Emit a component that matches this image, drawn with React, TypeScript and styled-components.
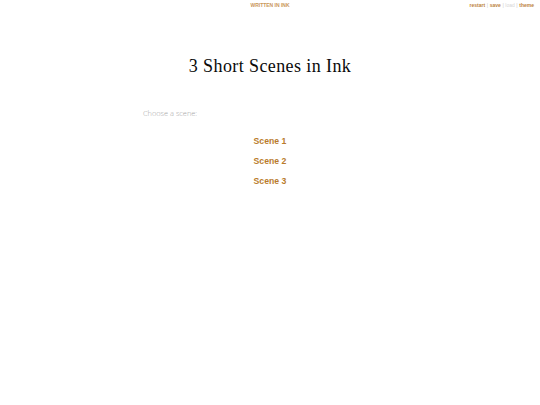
import React, { FC } from "react";
import styled, { createGlobalStyle } from "styled-components";

const GlobalStyle = createGlobalStyle`
  html, body {
    margin: 0;
    padding: 0;
    background: #ffffff;
  }
  body {
    font-family: "Open Sans", sans-serif;
    font-weight: 300;
  }
`;

const Page = styled.div`
  width: 540px;
  min-height: 405px;
  display: flex;
  flex-direction: column;
`;

const TopBar = styled.header`
  display: grid;
  grid-template-columns: 1fr auto 1fr;
  align-items: center;
  height: 10px;
  padding: 0 6px;
  font-family: "Liberation Sans", Arial, sans-serif;
  font-size: 5px;
  font-weight: 700;
`;

const WrittenInInk = styled.div`
  grid-column: 2;
  color: #c9965a;
`;

const Controls = styled.nav`
  grid-column: 3;
  justify-self: end;
  display: flex;
  gap: 1.6px;
`;

const ControlLink = styled.span<{ $disabled?: boolean }>`
  color: ${({ $disabled }) => ($disabled ? "#d6d6d6" : "#bb8240")};
  font-weight: ${({ $disabled }) => ($disabled ? 400 : 700)};
`;

const Separator = styled.span`
  color: #c8c8c8;
  font-weight: 400;
`;

const Container = styled.main`
  width: 254px;
  margin: 0 auto;
  padding-top: 43px;
`;

const Title = styled.h1`
  margin: 0;
  font-family: "Liberation Serif", "Times New Roman", serif;
  font-size: 18px;
  font-weight: 400;
  letter-spacing: 0.4px;
  color: #0a0a0a;
  text-align: center;
  line-height: 26px;
`;

const Prompt = styled.p`
  margin: 27px 0 0;
  font-family: "Open Sans", sans-serif;
  font-weight: 300;
  font-size: 7.4px;
  line-height: 14px;
  color: #a6a6a6;
`;

const Choices = styled.div`
  display: flex;
  flex-direction: column;
  align-items: center;
  gap: 5px;
  margin-top: 14px;
`;

const Choice = styled.a`
  font-family: "Liberation Sans", Arial, sans-serif;
  font-size: 8.7px;
  font-weight: 700;
  line-height: 15px;
  color: #b97c2c;
  text-decoration: none;
  cursor: pointer;
`;

const scenes = ["Scene 1", "Scene 2", "Scene 3"];

const App: FC = () => (
  <Page>
    <GlobalStyle />
    <TopBar>
      <WrittenInInk>WRITTEN IN INK</WrittenInInk>
      <Controls>
        <ControlLink>restart</ControlLink>
        <Separator>|</Separator>
        <ControlLink>save</ControlLink>
        <Separator>|</Separator>
        <ControlLink $disabled>load</ControlLink>
        <Separator>|</Separator>
        <ControlLink>theme</ControlLink>
      </Controls>
    </TopBar>
    <Container>
      <Title>3 Short Scenes in Ink</Title>
      <Prompt>Choose a scene:</Prompt>
      <Choices>
        {scenes.map((scene) => (
          <Choice key={scene}>{scene}</Choice>
        ))}
      </Choices>
    </Container>
  </Page>
);

export default App;
